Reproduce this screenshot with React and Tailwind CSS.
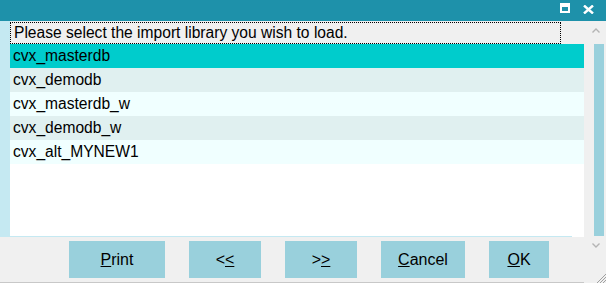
import React, { useState } from "react";

const libraries = [
  "cvx_masterdb",
  "cvx_demodb",
  "cvx_masterdb_w",
  "cvx_demodb_w",
  "cvx_alt_MYNEW1",
];

const rowColor = (i, selected) => {
  if (i === selected) return "bg-[#00cccc]";
  return i % 2 === 1 ? "bg-[#e0f0f0]" : "bg-[#f0ffff]";
};

const DialogButton = ({ width, children }) => (
  <button
    className={`${width} h-[37px] bg-[#99d0dc] text-black text-[16px] leading-none flex items-center justify-center`}
  >
    {children}
  </button>
);

const ImportLibraryDialog = () => {
  const [selected, setSelected] = useState(0);

  return (
    <div
      className="w-[606px] h-[283px] bg-[#f0f0f0] flex flex-col overflow-hidden"
      style={{ fontFamily: '"Liberation Sans", Arial, sans-serif' }}
    >
      {/* title bar */}
      <div className="h-[21px] bg-[#1e91aa] flex items-start justify-end">
        <svg width="10" height="10" viewBox="0 0 10 10" className="mt-[3px] mr-[13px]">
          <rect x="0" y="0" width="10" height="10" fill="#ffffff" />
          <rect x="2" y="4" width="6" height="4" fill="#1e91aa" />
        </svg>
        <svg width="11" height="9" viewBox="0 0 11 9" className="mt-[5px] mr-[12px]">
          <path d="M1 0.5 L10 8.5 M10 0.5 L1 8.5" stroke="#ffffff" strokeWidth="2.4" />
        </svg>
      </div>

      <div className="flex flex-1">
        <div className="w-[584px] flex flex-col">
          {/* list area */}
          <div className="h-[216px] flex">
            <div className="w-[10px] bg-[#c5e9f2]" />
            <div className="flex-1 flex flex-col bg-white">
              <div className="h-[23px] bg-[#f0f0f0] pt-[1px]">
                <div className="w-[551px] h-[22px] border border-dotted border-black flex items-center pl-[3px] text-[15.6px] text-black">
                  Please select the import library you wish to load.
                </div>
              </div>
              <div className="flex-1">
                {libraries.map((lib, i) => (
                  <div
                    key={lib}
                    onClick={() => setSelected(i)}
                    className={`h-[24px] flex items-center pl-[3px] pb-[1px] text-[15.6px] text-black ${rowColor(i, selected)}`}
                  >
                    {lib}
                  </div>
                ))}
              </div>
              <div className="h-px w-[562px] bg-[#c5e9f2]" />
            </div>
          </div>

          {/* buttons */}
          <div className="flex-1 flex gap-[24px] pl-[69px] pt-[4px] border-b border-[#c8c8c8]">
            <DialogButton width="w-[96px]">
              <span><span className="underline">P</span>rint</span>
            </DialogButton>
            <DialogButton width="w-[72px]">
              <span>&lt;<span className="underline">&lt;</span></span>
            </DialogButton>
            <DialogButton width="w-[72px]">
              <span>&gt;<span className="underline">&gt;</span></span>
            </DialogButton>
            <DialogButton width="w-[84px]">
              <span><span className="underline">C</span>ancel</span>
            </DialogButton>
            <DialogButton width="w-[60px]">
              <span><span className="underline">O</span>K</span>
            </DialogButton>
          </div>
        </div>

        {/* scrollbar */}
        <div className="w-[22px] flex flex-col">
          <div className="h-[23px] flex items-start justify-center pl-[2px]">
            <svg width="8" height="5" viewBox="0 0 8 5" className="mt-[7px]">
              <path d="M0.5 4.5 L4 1 L7.5 4.5" stroke="#b4b4b4" strokeWidth="1.4" fill="none" />
            </svg>
          </div>
          <div className="h-[192px] w-[10px] ml-[10px] bg-[#99d0dc]" />
          <div className="flex justify-center pl-[2px] pt-[7px]">
            <svg width="8" height="5" viewBox="0 0 8 5">
              <path d="M0.5 0.5 L4 4 L7.5 0.5" stroke="#b4b4b4" strokeWidth="1.4" fill="none" />
            </svg>
          </div>
          <div className="flex-1 flex items-end justify-end">
            <svg width="10" height="10" viewBox="0 0 10 10">
              <path d="M10 1 L1 10 M10 4 L4 10 M10 7 L7 10" stroke="#a0a0a0" strokeWidth="1" />
            </svg>
          </div>
        </div>
      </div>
    </div>
  );
};

export default function App() {
  return <ImportLibraryDialog />;
}
